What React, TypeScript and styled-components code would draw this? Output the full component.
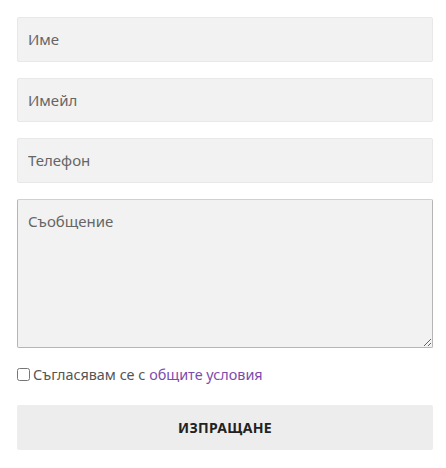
import React from 'react'
import styled, { createGlobalStyle } from 'styled-components'

const GlobalStyle = createGlobalStyle`
  html, body {
    margin: 0;
    padding: 0;
    background: #fff;
  }
  body {
    font-family: "Source Sans Pro", "Noto Sans", "Liberation Sans", sans-serif;
  }
`

const Form = styled.form`
  display: flex;
  flex-direction: column;
  padding: 17px 13px 0 17px;
`

const Field = styled.input`
  box-sizing: border-box;
  height: 44.6px;
  width: 100%;
  margin: 0 0 16px 0;
  padding: 0 10px;
  border: 1px solid #e8e8e8;
  border-radius: 2px;
  background: #f2f2f2;
  font-family: inherit;
  font-size: 15px;
  color: #555;
  outline: none;

  &::placeholder {
    color: #666;
  }
`

const Message = styled.textarea`
  box-sizing: border-box;
  height: 149px;
  width: 100%;
  margin: 0;
  padding: 11px 10px;
  border: 1px solid #b5b5b5;
  border-top-color: #d0d0d0;
  border-radius: 2px;
  background: #f2f2f2;
  font-family: inherit;
  font-size: 15px;
  color: #555;
  outline: none;

  &::placeholder {
    color: #666;
  }
`

const Consent = styled.label`
  display: flex;
  align-items: center;
  gap: 3px;
  margin: 16px 0 19px 0;
  height: 22px;
  font-size: 14.4px;
  color: #555;

  input {
    margin: 0;
    width: 13px;
    height: 13px;
  }

  a {
    color: #7b4cae;
    text-decoration: none;
  }
`

const Submit = styled.button`
  height: 45px;
  width: 100%;
  border: none;
  border-radius: 2px;
  background: #ededed;
  font-family: inherit;
  font-size: 14px;
  font-weight: 700;
  color: #222;
  text-transform: uppercase;
  letter-spacing: 0.3px;
  cursor: pointer;
`

export default function App() {
  return (
    <>
      <GlobalStyle />
      <Form onSubmit={e => e.preventDefault()}>
        <Field type="text" placeholder="Име" />
        <Field type="email" placeholder="Имейл" />
        <Field type="tel" placeholder="Телефон" />
        <Message placeholder="Съобщение" />
        <Consent>
          <input type="checkbox" />
          <span>
            Съгласявам се с <a href="#">общите условия</a>
          </span>
        </Consent>
        <Submit type="submit">Изпращане</Submit>
      </Form>
    </>
  )
}
